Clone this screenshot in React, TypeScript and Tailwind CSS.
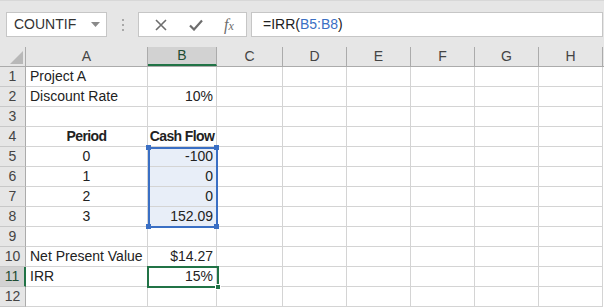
import React from "react";

const cols = ["A", "B", "C", "D", "E", "F", "G", "H"];
const widths = [122, 69, 66, 64, 64, 64, 64, 64];

type Cell = { t: string; align?: "l" | "r" | "c"; bold?: boolean };
const data: Record<number, Record<string, Cell>> = {
  1: { A: { t: "Project A" } },
  2: { A: { t: "Discount Rate" }, B: { t: "10%", align: "r" } },
  4: { A: { t: "Period", align: "c", bold: true }, B: { t: "Cash Flow", align: "c", bold: true } },
  5: { A: { t: "0", align: "c" }, B: { t: "-100", align: "r" } },
  6: { A: { t: "1", align: "c" }, B: { t: "0", align: "r" } },
  7: { A: { t: "2", align: "c" }, B: { t: "0", align: "r" } },
  8: { A: { t: "3", align: "c" }, B: { t: "152.09", align: "r" } },
  10: { A: { t: "Net Present Value" }, B: { t: "$14.27", align: "r" } },
  11: { A: { t: "IRR" }, B: { t: "15%", align: "r" } },
};

export default function App() {
  const rows = Array.from({ length: 12 }, (_, i) => i + 1);
  return (
    <div
      className="w-[604px] h-[307px] overflow-hidden bg-white text-[#222]"
      style={{ fontFamily: '"Liberation Sans", Arial, sans-serif' }}
    >
      {/* top bar */}
      <div className="h-[47px] bg-[#e6e6e6] flex items-start pt-[11px] pl-[6px] border-t border-[#d8d8d8]">
        <div className="w-[101px] h-[25px] bg-white border border-[#c6c6c6] flex items-center justify-between pl-[7px] pr-[6px] text-[14px] text-[#333]">
          <span>COUNTIF</span>
          <svg width="9" height="5" viewBox="0 0 9 5">
            <path d="M0 0h9L4.5 5z" fill="#8a8a8a" />
          </svg>
        </div>
        <div className="w-[31px] h-[25px] flex flex-col items-center justify-center gap-[3px]">
          <span className="w-[2px] h-[2px] bg-[#a8a8a8]" />
          <span className="w-[2px] h-[2px] bg-[#a8a8a8]" />
          <span className="w-[2px] h-[2px] bg-[#a8a8a8]" />
        </div>
        <div className="w-[109px] h-[25px] bg-white border border-[#c6c6c6] flex items-center">
          <svg width="12" height="12" viewBox="0 0 12 12" className="ml-[16px]">
            <path d="M1 1L11 11M11 1L1 11" stroke="#6d6d6d" strokeWidth="1.6" />
          </svg>
          <svg width="14" height="12" viewBox="0 0 14 12" className="ml-[22px]">
            <path d="M1 6.5L5 10.5L13 1.5" stroke="#6d6d6d" strokeWidth="2.2" fill="none" />
          </svg>
          <span
            className="ml-[21px] text-[16px] italic text-[#6d6d6d] leading-none"
            style={{ fontFamily: '"Liberation Serif", "Times New Roman", serif' }}
          >
            f<span className="text-[12px]">x</span>
          </span>
        </div>
        <div className="ml-[4px] w-[352px] h-[25px] bg-white border border-[#c6c6c6] flex items-center pl-[11px] text-[14px] text-[#222]">
          <span>
            =IRR(<span className="text-[#3a6fc4]">B5:B8</span>)
          </span>
        </div>
      </div>

      {/* grid */}
      <div className="relative">
        {/* header row */}
        <div className="flex h-[20px] bg-[#e6e6e6] border-b border-[#ababab]">
          <div className="w-[26px] h-full border-r border-[#ababab] relative flex items-end justify-end pr-[2px] pb-[2px]">
            <svg width="13" height="13" viewBox="0 0 13 13">
              <path d="M13 0V13H0z" fill="#b8b8b8" />
            </svg>
          </div>
          {cols.map((c, i) => (
            <div
              key={c}
              style={{ width: widths[i] }}
              className={`h-full border-r border-[#ababab] flex items-center justify-center text-[14px] ${
                c === "B" ? "bg-[#d2d2d2] border-b-2 border-b-[#217346] text-[#1f4d33]" : "text-[#444]"
              }`}
            >
              {c}
            </div>
          ))}
        </div>
        {rows.map((r) => (
          <div key={r} className="flex h-[20px]">
            <div
              className={`w-[26px] h-full border-b border-[#c8c8c8] flex items-center justify-center text-[14px] ${
                r === 11
                  ? "bg-[#d2d2d2] border-r-2 border-r-[#217346] text-[#1f4d33]"
                  : "bg-[#e6e6e6] border-r border-r-[#ababab] text-[#444]"
              }`}
            >
              {r}
            </div>
            {cols.map((c, i) => {
              const cell = data[r]?.[c];
              const inSel = c === "B" && r >= 5 && r <= 8;
              return (
                <div
                  key={c}
                  style={{ width: widths[i] }}
                  className={`h-full border-r border-b border-[#d4d4d4] flex items-end pb-[1px] leading-[17px] whitespace-nowrap text-[14px] ${
                    inSel ? "bg-[#e8eef8]" : ""
                  } ${
                    cell?.align === "r"
                      ? "justify-end pr-[3px]"
                      : cell?.align === "c"
                      ? "justify-center"
                      : "justify-start pl-[4px]"
                  } ${cell?.bold ? "font-bold tracking-[-0.6px]" : ""}`}
                >
                  {cell?.t}
                </div>
              );
            })}
          </div>
        ))}

        {/* blue range selection B5:B8 */}
        <div className="absolute left-[148px] top-[100px] w-[70px] h-[81px] border-2 border-[#3a6fc4] pointer-events-none" />
        <div className="absolute left-[146px] top-[98px] w-[5px] h-[5px] bg-[#3a6fc4]" />
        <div className="absolute left-[214px] top-[98px] w-[5px] h-[5px] bg-[#3a6fc4]" />
        <div className="absolute left-[146px] top-[177px] w-[5px] h-[5px] bg-[#3a6fc4]" />
        <div className="absolute left-[214px] top-[177px] w-[5px] h-[5px] bg-[#3a6fc4]" />

        {/* active cell B11 */}
        <div className="absolute left-[147px] top-[219px] w-[72px] h-[22px] border-2 border-[#217346] pointer-events-none" />
        <div className="absolute left-[215px] top-[237px] w-[6px] h-[6px] bg-[#217346] border border-white" />
      </div>
    </div>
  );
}
